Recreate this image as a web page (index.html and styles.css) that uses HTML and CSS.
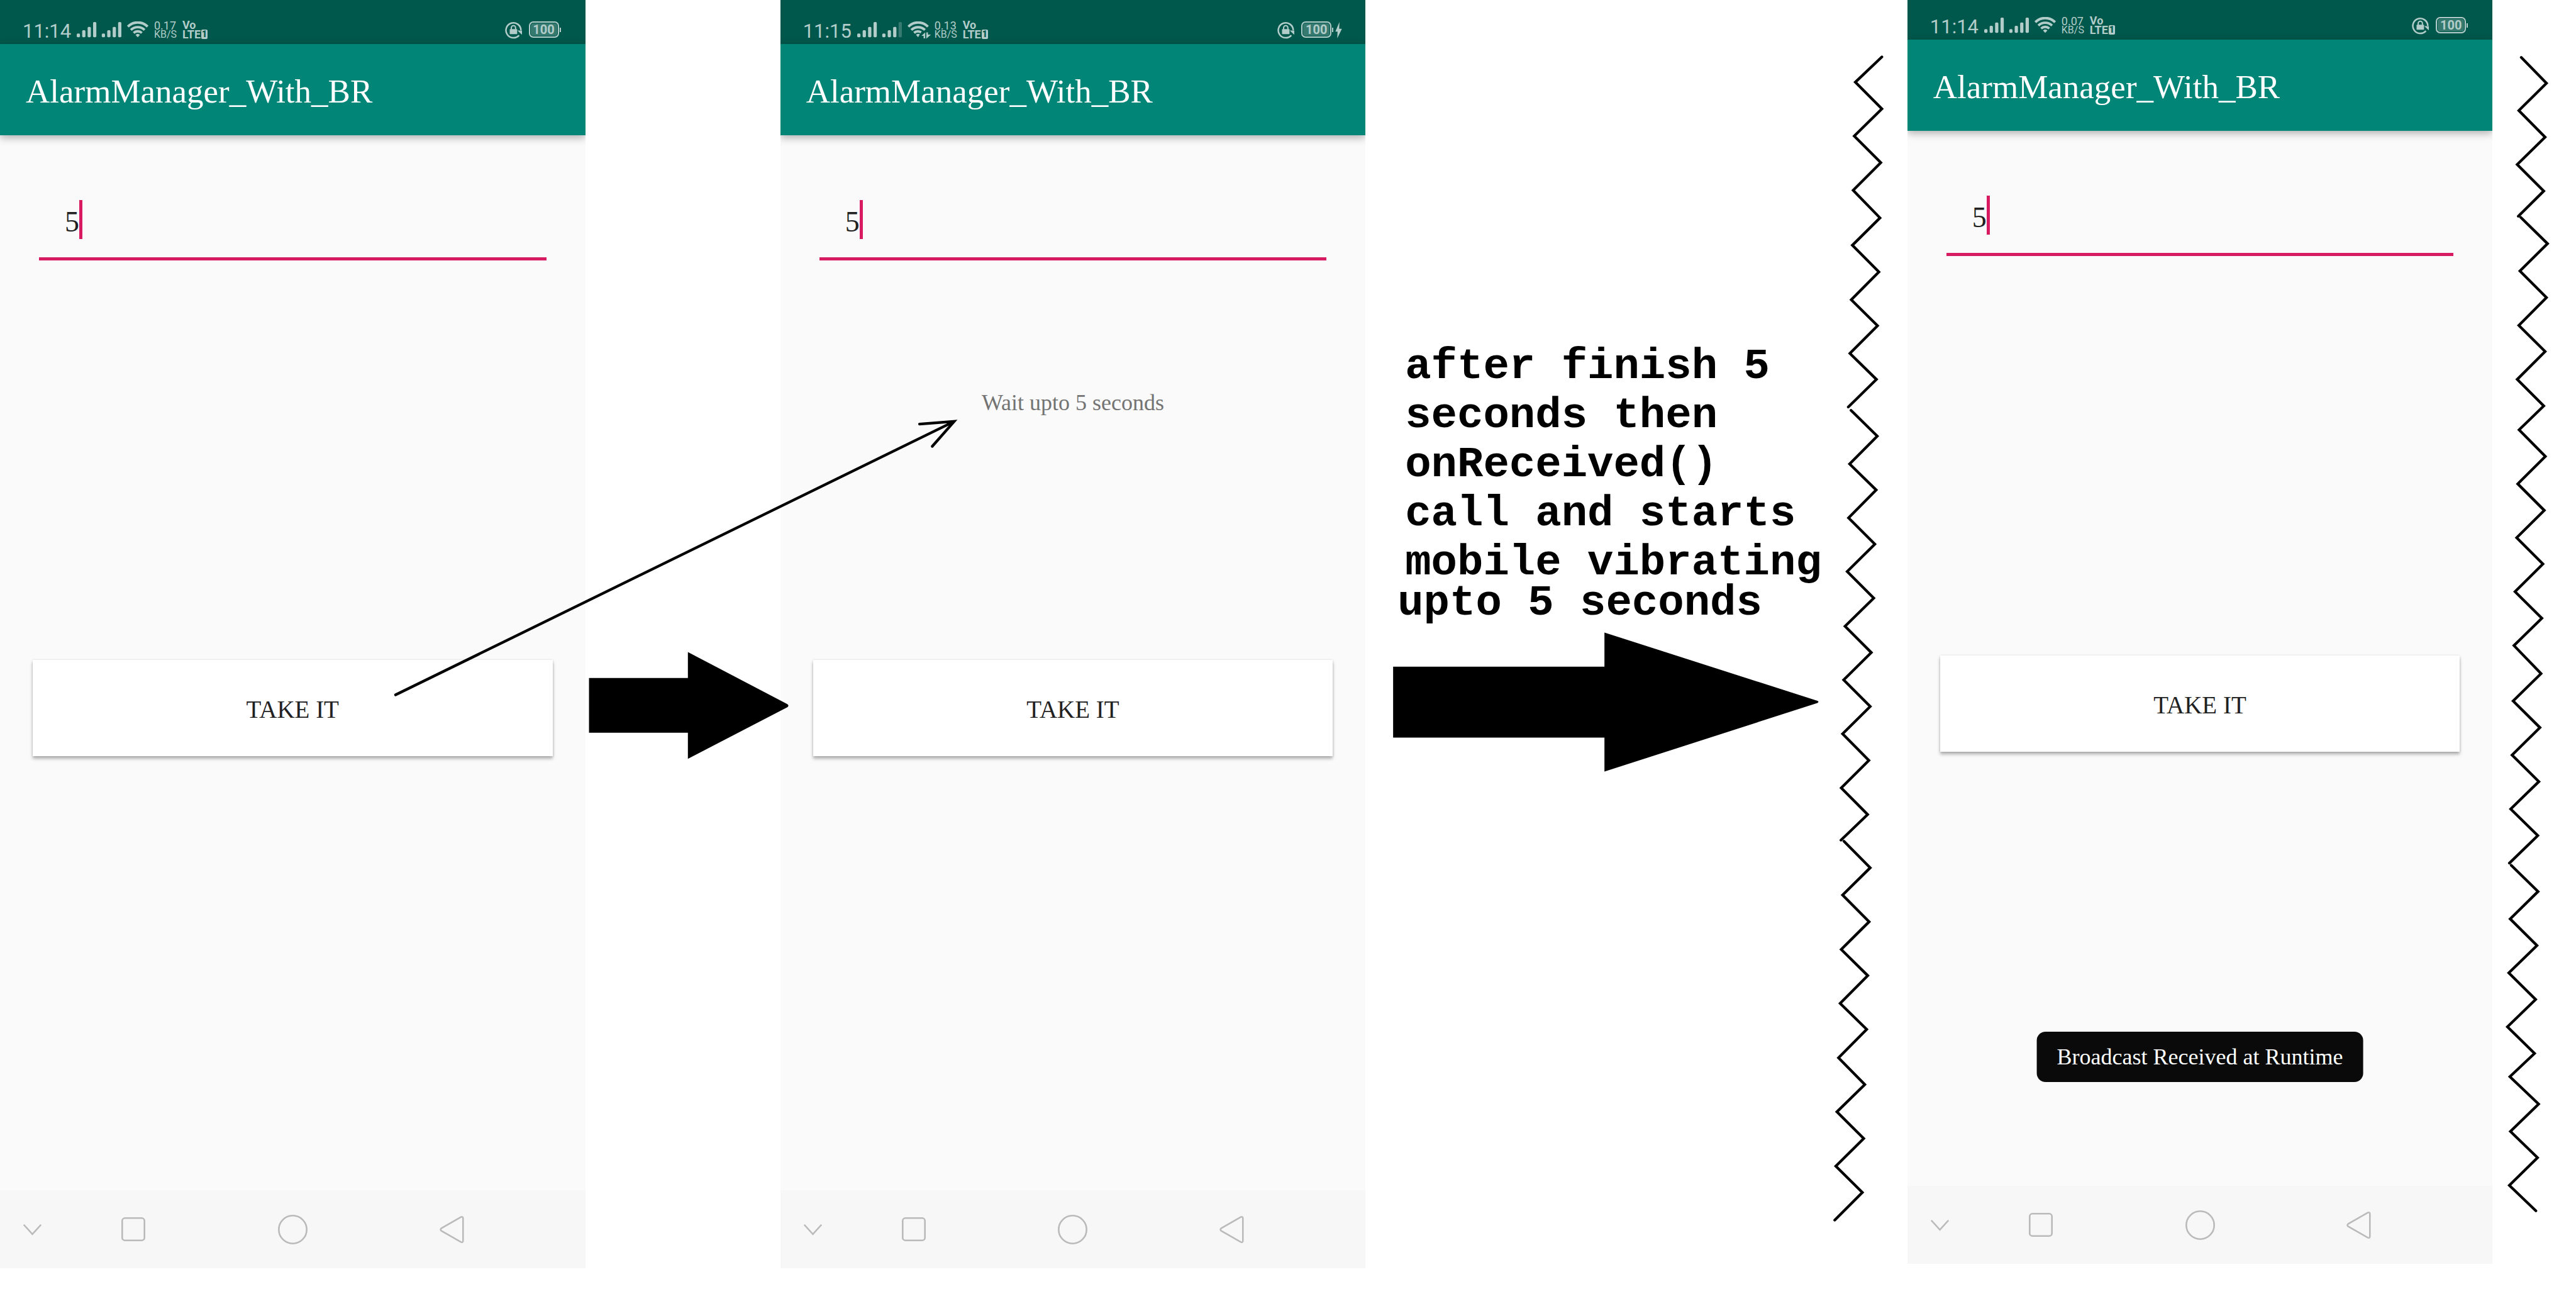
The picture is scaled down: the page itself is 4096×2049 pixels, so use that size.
FILE: index.html
```html
<!DOCTYPE html>
<html lang="en">
<head>
<meta charset="utf-8">
<meta name="viewport" content="width=device-width, initial-scale=1">
<title>AlarmManager_With_BR</title>
<link rel="stylesheet" href="styles.css">
</head>
<body>
<svg class="sprite" aria-hidden="true">
  <symbol id="bars" viewBox="143 40 82 32">
    <rect x="143" y="62" width="6" height="7" rx="2"/><rect x="153" y="56" width="6" height="13" rx="2"/>
    <rect x="163" y="50" width="6" height="19" rx="2"/><rect x="173" y="41" width="6" height="28" rx="2"/>
    <rect x="189" y="62" width="6" height="7" rx="2"/><rect x="199" y="56" width="6" height="13" rx="2"/>
    <rect x="209" y="50" width="6" height="19" rx="2"/><rect class="last-bar" x="219" y="41" width="6" height="28" rx="2"/>
  </symbol>
  <symbol id="wifi" viewBox="235 40 39 32">
    <g fill="none" stroke="currentColor" stroke-width="4.500">
      <path d="M236.500 49.500a25 25 0 0 1 36 0"/><path d="M242 55.500a18 18 0 0 1 25 0"/><path d="M247 61a11 11 0 0 1 15 0"/>
    </g>
    <path d="M250.500 64.500a6 6 0 0 1 8 0l-4 4.500z"/>
  </symbol>
  <symbol id="wifi-busy" viewBox="235 40 45 32">
    <g fill="none" stroke="currentColor" stroke-width="4.500">
      <path d="M236.500 49.500a25 25 0 0 1 36 0"/><path d="M242 55.500a18 18 0 0 1 25 0"/><path d="M247 61a11 11 0 0 1 13 -1"/>
    </g>
    <path d="M250.500 64.500a6 6 0 0 1 7 -1l-3 5.500z"/>
    <path d="M260.500 66.500l7-6.500v11h-3v-4.500zM269.500 60h3v4h5.500l-8.500 7.500z"/>
  </symbol>
  <symbol id="rotation-lock" viewBox="929 40 33 32">
    <path fill="none" stroke="currentColor" stroke-width="3" d="M960 56A14 14 0 1 0 956.500 65.500"/>
    <path d="M953.500 56.500h8.500v8z"/>
    <rect x="939" y="54" width="14" height="9.500" rx="1"/>
    <path fill="none" stroke="currentColor" stroke-width="2.400" d="M942 54.500v-3a4 4 0 0 1 8 0v3"/>
  </symbol>
  <symbol id="bolt" viewBox="1024 40 15 32">
    <path d="M1033 41l-7.500 17.500h4l-.500 12.500 8.500-17.500h-5z"/>
  </symbol>
  <symbol id="chevron" viewBox="0 0 34 22"><path d="M1 2l16 17.500L33 2"/></symbol>
  <symbol id="recent" viewBox="0 0 44 44"><rect x="1.500" y="1.500" width="41" height="41" rx="5"/></symbol>
  <symbol id="home" viewBox="0 0 54 54"><circle cx="27" cy="27" r="25.500"/></symbol>
  <symbol id="back" viewBox="0 0 46 52"><path d="M40 2.500L3.500 23.500q-3.500 2.500 0 5L40 49.500q4 1.500 4-3v-41q0-4.500-4-3z"/></symbol>
</svg>

<main class="board">
  <section class="phone">
    <div class="status">
      <time class="clock">11:14</time>
      <svg class="icon icon-bars"><use href="#bars"/></svg>
      <svg class="icon icon-wifi"><use href="#wifi"/></svg>
      <div class="speed"><span>0.17</span><small>KB/S</small></div>
      <div class="volte"><span>Vo</span><span class="lte">LTE<b class="sim">1</b></span></div>
      <svg class="icon icon-lock"><use href="#rotation-lock"/></svg>
      <div class="battery">100</div>
    </div>
    <header class="app-bar"><h1>AlarmManager_With_BR</h1></header>
    <form class="screen">
      <label class="field"><input type="text" aria-label="Seconds" value="5"><span class="caret"></span></label>
      <output class="message"></output>
      <button class="take" type="button">TAKE IT</button>
    </form>
    <nav class="nav">
      <button class="nav-hide" type="button" aria-label="Hide bar"><svg class="glyph glyph-hide"><use href="#chevron"/></svg></button>
      <button type="button" aria-label="Recent apps"><svg class="glyph glyph-recent"><use href="#recent"/></svg></button>
      <button type="button" aria-label="Home"><svg class="glyph glyph-home"><use href="#home"/></svg></button>
      <button type="button" aria-label="Back"><svg class="glyph glyph-back"><use href="#back"/></svg></button>
    </nav>
  </section>

  <div class="gap"></div>

  <section class="phone">
    <div class="status status-charging">
      <time class="clock">11:15</time>
      <svg class="icon icon-bars weak"><use href="#bars"/></svg>
      <svg class="icon icon-wifi-busy"><use href="#wifi-busy"/></svg>
      <div class="speed"><span>0.13</span><small>KB/S</small></div>
      <div class="volte"><span>Vo</span><span class="lte">LTE<b class="sim">1</b></span></div>
      <svg class="icon icon-lock"><use href="#rotation-lock"/></svg>
      <div class="battery">100</div>
      <svg class="icon icon-bolt"><use href="#bolt"/></svg>
    </div>
    <header class="app-bar"><h1>AlarmManager_With_BR</h1></header>
    <form class="screen">
      <label class="field"><input type="text" aria-label="Seconds" value="5"><span class="caret"></span></label>
      <output class="message">Wait upto 5 seconds</output>
      <button class="take" type="button">TAKE IT</button>
    </form>
    <nav class="nav">
      <button class="nav-hide" type="button" aria-label="Hide bar"><svg class="glyph glyph-hide"><use href="#chevron"/></svg></button>
      <button type="button" aria-label="Recent apps"><svg class="glyph glyph-recent"><use href="#recent"/></svg></button>
      <button type="button" aria-label="Home"><svg class="glyph glyph-home"><use href="#home"/></svg></button>
      <button type="button" aria-label="Back"><svg class="glyph glyph-back"><use href="#back"/></svg></button>
    </nav>
  </section>

  <div class="note">
    <p>after finish 5<br>seconds then<br>onReceived()<br>call and starts<br>mobile vibrating</p>
    <p class="note-end">upto 5 seconds</p>
  </div>

  <section class="phone">
    <div class="status status-short">
      <time class="clock">11:14</time>
      <svg class="icon icon-bars"><use href="#bars"/></svg>
      <svg class="icon icon-wifi"><use href="#wifi"/></svg>
      <div class="speed"><span>0.07</span><small>KB/S</small></div>
      <div class="volte"><span>Vo</span><span class="lte">LTE<b class="sim">1</b></span></div>
      <svg class="icon icon-lock"><use href="#rotation-lock"/></svg>
      <div class="battery">100</div>
    </div>
    <header class="app-bar"><h1>AlarmManager_With_BR</h1></header>
    <form class="screen">
      <label class="field"><input type="text" aria-label="Seconds" value="5"><span class="caret"></span></label>
      <output class="message"></output>
      <button class="take" type="button">TAKE IT</button>
      <div class="toast" role="status">Broadcast Received at Runtime</div>
    </form>
    <nav class="nav">
      <button class="nav-hide" type="button" aria-label="Hide bar"><svg class="glyph glyph-hide"><use href="#chevron"/></svg></button>
      <button type="button" aria-label="Recent apps"><svg class="glyph glyph-recent"><use href="#recent"/></svg></button>
      <button type="button" aria-label="Home"><svg class="glyph glyph-home"><use href="#home"/></svg></button>
      <button type="button" aria-label="Back"><svg class="glyph glyph-back"><use href="#back"/></svg></button>
    </nav>
  </section>

  <svg class="ink" viewBox="0 0 4754 2378" aria-hidden="true">
    <!-- block arrows between the steps -->
    <path class="solid" d="M1087 1251H1269.500V1203L1453 1299q4 3 0 6L1269.500 1400V1352H1087z"/>
    <path class="solid" d="M2571 1230H2961V1167L3354 1293q4 2 0 4L2961 1423.500V1361H2571z"/>
    <!-- pointer from the button to the message -->
    <path class="line" d="M730 1282L1761 777.500M1697 782.500L1761 777.500L1720.500 823.500"/>
    <!-- vibration marks, left -->
    <path class="line" d="M3473 105L3424 151.600L3473 200.700L3422 251L3471 300L3420 351L3469.500 402L3418.500 452.500L3467.500 501.600L3416.500 553L3465 601L3414 652L3463 700L3411 751"/>
    <path class="line" d="M3416 757L3464.500 804.700L3413.500 856L3462.500 904L3411.500 955.500L3460 1004L3409 1054.400L3458 1103.500L3405 1155.400L3453.500 1204L3402.500 1254.400L3451.500 1303.500L3400.500 1354L3449 1403L3398 1453.600L3446.700 1502.700L3397.500 1550"/>
    <path class="line" d="M3403 1552L3451.500 1601L3400.500 1651.400L3449.500 1700.500L3398 1751.700L3447 1800L3396 1851.300L3445 1899L3393 1951.700L3441.500 2001L3390 2051.300L3439.500 2100.400L3388 2151.600L3437 2200L3386 2251"/>
    <!-- vibration marks, right -->
    <path class="line" d="M4653 106L4699.500 153.500L4648.500 204L4697 253L4645.500 303.500L4694.500 352.400L4647.500 399"/>
    <path class="line" d="M4652 401L4701.500 449.600L4650.500 500L4699.500 549L4648.500 600.400L4697 648.600L4645.500 700L4694.500 749L4649 793L4697.500 842L4646.500 892.700L4695.500 941.700L4644.500 992L4693 1040.500L4641.500 1091.700L4691 1140.700L4639.500 1191L4689.500 1242.700L4638 1293.300L4687.500 1342.400L4636 1393L4685.500 1442L4633.500 1492.500L4683.500 1541.600L4631 1592.500"/>
    <path class="line" d="M4634.500 1596.400L4684 1644.800L4632.500 1695.300L4682 1744.400L4630 1795L4679.500 1844L4627.500 1894.500L4677.500 1943.600L4632 1986.400L4685 2037L4633 2087.400L4683 2135.800L4631 2187L4680 2234"/>
  </svg>
</main>
</body>
</html>
```
FILE: styles.css
```css
* {
  box-sizing: border-box;
}

body {
  margin: 0;
  background: #fff;
  color: #212121;
  font-family: "Liberation Serif", "Times New Roman", serif;
}

h1,
p {
  margin: 0;
}

button {
  border: 0;
  padding: 0;
  background: none;
  font: inherit;
  color: inherit;
}

.sprite {
  position: absolute;
  width: 0;
  height: 0;
}

.board {
  position: relative;
  display: grid;
  grid-template-columns: 1080fr 360fr 1080fr 1000fr 1080fr;
  align-items: start;
  padding-right: 3.24%;
  overflow: hidden;
  min-height: 100vh;
}

.phone {
  min-width: 0;
  overflow: hidden;
  background: #fafafa;
}

/* status bar */
.status {
  display: flex;
  align-items: flex-end;
  gap: 9px;
  height: 70px;
  padding: 0 42px 8px 36px;
  background: #00574b;
  color: #b2cdc9;
  font-family: Roboto, sans-serif;
}

.status-short {
  height: 63px;
}

.status-charging {
  padding-right: 36px;
}

.clock {
  width: 77px;
  font-size: 31px;
  line-height: 24px;
}

.icon {
  height: 28px;
  fill: currentColor;
}

.icon-bars {
  width: 71px;
}

.icon-wifi {
  width: 34px;
}

.icon-wifi-busy {
  width: 39px;
  margin-right: -5px;
}

.icon-lock {
  width: 28px;
  margin-left: auto;
}

.icon-bolt {
  width: 13px;
  margin-left: -4px;
}

.weak {
  --last-bar: 0.3;
}

.last-bar {
  opacity: var(--last-bar, 1);
}

.speed,
.volte {
  display: flex;
  flex-direction: column;
  width: 36px;
  font-size: 18px;
  line-height: 14px;
}

.speed small {
  font-size: 16px;
}

.volte {
  width: auto;
  font-weight: 700;
  line-height: 15px;
}

.lte {
  display: flex;
  align-items: center;
  gap: 1px;
}

.sim {
  width: 10px;
  border-radius: 2px;
  background: #b2cdc9;
  color: #00574b;
  font-size: 14px;
  text-align: center;
}

.battery {
  position: relative;
  width: 48px;
  height: 26px;
  margin: 0 0 2px 2px;
  border: 2px solid #b2cdc9;
  border-radius: 7px;
  background: #35796f content-box;
  padding: 1px;
  font-size: 20px;
  font-weight: 700;
  line-height: 21px;
  text-align: center;
}

.battery::after {
  content: "";
  position: absolute;
  right: -5px;
  top: 8px;
  width: 2px;
  height: 7px;
  background: #b2cdc9;
}

/* app bar */
.app-bar {
  position: relative;
  display: flex;
  align-items: center;
  height: 145px;
  padding: 5px 41px 0;
  background: #008577;
  box-shadow: 0 4px 12px rgba(0, 0, 0, 0.3);
  color: #fff;
}

.app-bar h1 {
  font-size: 53px;
  font-weight: 400;
  line-height: 62px;
}

/* content */
.screen {
  position: relative;
  display: flex;
  flex-direction: column;
  padding: 100px 52px 690px;
}

.field {
  position: relative;
  display: block;
  margin: 0 10px;
}

.field input {
  display: block;
  width: 100%;
  height: 99px;
  padding: 0 41px 20px;
  border: 0;
  border-bottom: 5px solid #d81b60;
  border-radius: 0;
  outline: 0;
  background: none;
  color: #212121;
  font-family: inherit;
  font-size: 46px;
}

.caret {
  position: absolute;
  left: 64px;
  top: 3px;
  width: 5px;
  height: 62px;
  background: #d81b60;
}

.message {
  height: 44px;
  margin-top: 204px;
  color: #737373;
  font-size: 36px;
  line-height: 44px;
  text-align: center;
}

.take {
  height: 153px;
  margin-top: 387px;
  padding-top: 3px;
  background: #fff;
  box-shadow: 0 4px 5px rgba(0, 0, 0, 0.3), 0 0 3px rgba(0, 0, 0, 0.12);
  font-size: 39px;
}

.toast {
  position: absolute;
  left: 50%;
  bottom: 165px;
  transform: translateX(-50%);
  padding: 0 32px;
  border-radius: 14px;
  background: #0a0a0a;
  color: #fff;
  font-size: 36px;
  line-height: 80px;
  white-space: nowrap;
}

/* navigation bar */
.nav {
  display: grid;
  grid-template-columns: 86fr 253fr 253fr 253fr 86fr;
  height: 124px;
  background: #f7f7f7;
}

.nav button {
  display: flex;
  align-items: center;
  justify-content: center;
}

.nav .nav-hide {
  padding-left: 18px;
}

.glyph {
  fill: none;
  stroke: #bababa;
  stroke-width: 3;
}

.glyph-hide {
  width: 29px;
  height: 19px;
}

.glyph-recent {
  width: 38px;
  height: 38px;
}

.glyph-home {
  width: 47px;
  height: 47px;
}

.glyph-back {
  width: 39px;
  height: 45px;
}

/* explanation between the second and third phone */
.note {
  padding: 544px 0 0 63px;
  color: #000;
  font-family: "Courier New", "Liberation Mono", monospace;
  font-size: 69px;
  font-weight: 700;
  line-height: 78px;
  white-space: nowrap;
}

.note-end {
  margin: -14px 0 0 -12px;
}

/* hand-drawn marks over the whole board */
.ink {
  position: absolute;
  left: 0;
  top: 0;
  width: 100%;
  pointer-events: none;
}

.solid {
  fill: #000;
}

.line {
  fill: none;
  stroke: #000;
  stroke-width: 5;
  stroke-linecap: round;
}
```
